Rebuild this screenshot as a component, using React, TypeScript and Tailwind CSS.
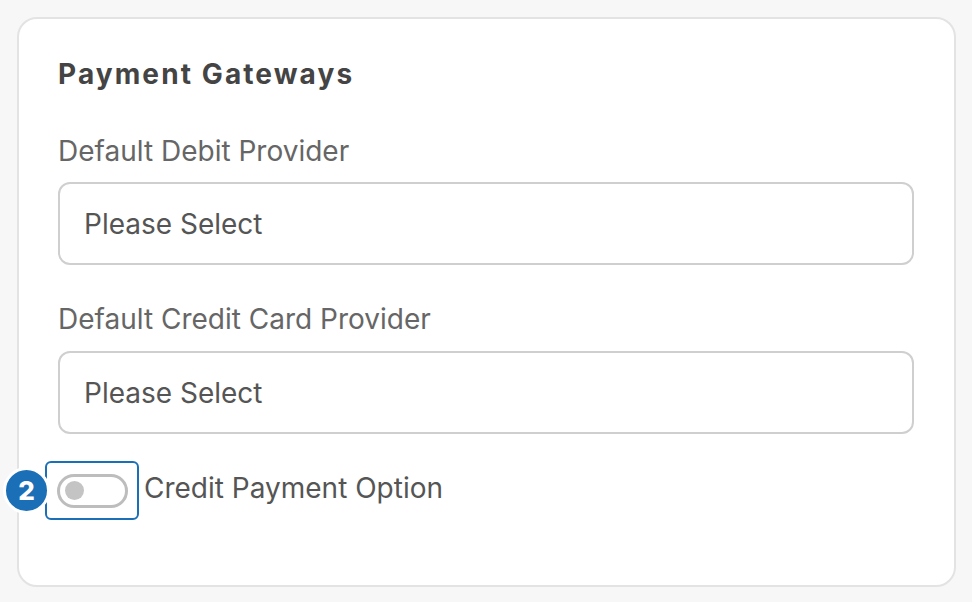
export default function App() {
  return (
    <div className="min-h-[602px] w-[972px] bg-[#f7f7f7] pt-[17px] pl-[17px] font-['Inter',sans-serif]">
      <div className="h-[570px] w-[939px] rounded-[20px] border-2 border-[#e3e3e3] bg-white pl-[39px] pr-[40px] pt-[38px]">
        <h2 className="text-[28px] leading-[34px] font-bold tracking-[0.075em] text-[#444]">Payment Gateways</h2>

        <label className="mt-[43px] block text-[28px] leading-[34px] text-[#666]">Default Debit Provider</label>
        <div className="mt-[14px] flex h-[83px] items-center rounded-[12px] border-2 border-[#cfcfcf] px-[24px] text-[28px] text-[#555]">
          Please Select
        </div>

        <label className="mt-[37px] block text-[28px] leading-[34px] text-[#666]">Default Credit Card Provider</label>
        <div className="mt-[15px] flex h-[83px] items-center rounded-[12px] border-2 border-[#cfcfcf] px-[24px] text-[28px] text-[#555]">
          Please Select
        </div>

        <div className="relative mt-[27px] ml-[-13px] flex items-center gap-[5px]">
          <div className="flex h-[59px] w-[94px] items-center rounded-[6px] border-2 border-[#1b6fb6] pl-[10px]">
            <div className="flex h-[34px] w-[71px] items-center rounded-full border-[3px] border-[#bdbdbd] pl-[5px]">
              <div className="h-[19px] w-[19px] rounded-full bg-[#c4c4c4]" />
            </div>
          </div>
          <span className="mb-[5px] text-[28px] leading-[34px] text-[#555]">Credit Payment Option</span>
          <div className="absolute left-[-42px] top-[6px] flex h-[47px] w-[47px] items-center justify-center rounded-full border-[3px] border-white bg-[#1b6fb6] text-[26px] font-extrabold text-white">
            2
          </div>
        </div>
      </div>
    </div>
  );
}
